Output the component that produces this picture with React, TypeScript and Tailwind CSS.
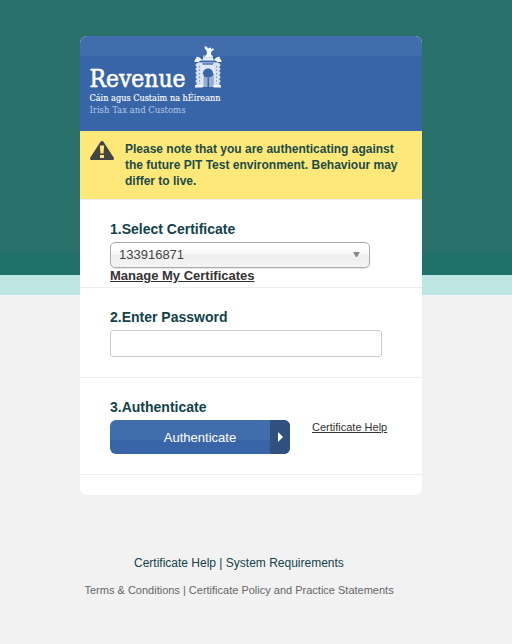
import React from "react";

function CustomsHouseArch() {
  return (
    <g fill="#f4f8fd">
      {/* statue */}
      <path d="M204.500 46.500h2.200l1.300 2.300 1-1h2.200v1.500l1.900-1 1 1.200-2.600 2-.6 2.500 1.600 3h-7.500l2-3.500-.5-3-1.500-1.500z" />
      <path d="M203 55.500h10v2.500h-10z" opacity=".6" />
      {/* scrolled wings and pediment */}
      <path d="M194.500 62c0-2 .8-3.300 2.200-4l-.7-1.200c2.500-.3 4.300.8 5.500 2.700h13c1.200-1.900 3-3 5.500-2.700l-.7 1.200c1.400.7 2.200 2 2.200 4h-4l-2-1.500h-15L198.500 62z" />
      <path d="M203 57.500h10v2.500h-10z" opacity=".9" />
      <path d="M198 62h20v1.500h-20z" opacity=".5" />
      {/* side pillars with alternating courses */}
      <path d="M196.500 63h6V87h-6zM213.500 63h6V87h-6z" opacity=".86" />
      <path d="M195.700 64h1v2h-1zm0 4h1v2h-1zm0 4h1v2h-1zm0 4h1v2h-1zm0 4h1v2h-1zM219.300 64h1v2h-1zm0 4h1v2h-1zm0 4h1v2h-1zm0 4h1v2h-1zm0 4h1v2h-1z" />
      <path d="M195 85h7.500v2.500H195zM213.500 85h7.500v2.500h-7.500z" />
      {/* arch surround with the open oculus below it */}
      <path d="M202 64.500h12v9h-1c0-2.800-2-5-5-5s-5 2.200-5 5h-1z" opacity=".88" />
      <path d="M202.500 74.500c1.200 2 3 3 5.500 3s4.300-1 5.500-3V87h-4.500v-9h-1.500v9h-5z" opacity=".5" />
      <path d="M202 74h1.500v13H202z" opacity=".8" />
      <path d="M199.500 66v18M216.500 66v18" stroke="#3864a8" strokeWidth=".6" strokeDasharray="1.500 2" />
      <path d="M203 64.500h10" stroke="#3864a8" strokeWidth=".5" strokeDasharray="1 1" />
    </g>
  );
}

function RevenueLogo() {
  return (
    <svg
      viewBox="80 36 160 90"
      className="block h-[90px] w-40 [font-family:'DejaVu_Serif_Condensed','DejaVu_Serif',serif]"
      role="img"
      aria-label="Revenue"
    >
      <text x="89.500" y="86.800" fontSize="25" textLength="96" lengthAdjust="spacingAndGlyphs" fill="#ffffff" stroke="#ffffff" strokeWidth=".6">
        Revenue
      </text>
      <text x="89.500" y="101" fontSize="10" textLength="131" lengthAdjust="spacingAndGlyphs" fill="#ffffff" stroke="#ffffff" strokeWidth=".15">
        Cáin agus Custaim na hÉireann
      </text>
      <text x="89.500" y="113" fontSize="10" textLength="96" lengthAdjust="spacingAndGlyphs" fill="#b5c8e5">
        Irish Tax and Customs
      </text>
      <CustomsHouseArch />
    </svg>
  );
}

function WarningIcon() {
  return (
    <svg viewBox="0 0 24 19" className="h-[19px] w-6 shrink-0">
      <path d="M10.500.8Q12-.8 13.500.8L23.800 16.800Q24.400 19 22.500 19H1.500Q-.4 19 .2 16.800Z" fill="#444444" />
      <path d="M9.800 4.500h4.400l-.7 8h-3zM10 14h4v3h-4z" fill="#fee879" />
    </svg>
  );
}

function Heading({ children }: { children: React.ReactNode }) {
  return <h2 className="text-[14px] leading-4 font-bold text-[#12424a]">{children}</h2>;
}

export default function App() {
  return (
    <div className="h-[644px] w-[512px] overflow-hidden bg-[linear-gradient(#29706a_0_253px,#20716a_253px_275px,#bee6e3_275px_295px,#f2f2f2_295px)] pt-9 [font-family:'Liberation_Sans',Arial,sans-serif]">
      <main className="ml-20 h-[459px] w-[342px] overflow-hidden rounded-[7px] bg-white">
        <header className="h-[95px] bg-[linear-gradient(#416dac_0_20px,#3864a8_20px)]">
          <RevenueLogo />
        </header>

        <div className="flex h-[69px] gap-[11px] border-b border-[#eeeeee] bg-[#fee879] pt-[10px] pl-[10px]">
          <WarningIcon />
          <p className="text-[12px] leading-4 font-bold whitespace-nowrap text-[#1c4b48]">
            Please note that you are authenticating against
            <br />
            the future PIT Test environment. Behaviour may
            <br />
            differ to live.
          </p>
        </div>

        <section className="h-[88px] border-b border-[#eeeeee] px-[30px] pt-[21px]">
          <Heading>1.Select Certificate</Heading>
          <button className="mt-[5px] flex h-[26px] w-[260px] items-center justify-between rounded-[5px] border border-[#aaaaaa] bg-[linear-gradient(#ffffff_20%,#f6f6f6_50%,#eeeeee_52%,#f4f4f4_100%)] pr-[9px] pl-2 text-[13px] leading-4 text-[#444444] shadow-[0_1px_1px_rgba(0,0,0,0.1)]">
            <span>133916871</span>
            <svg viewBox="0 0 7 5" className="mb-[2px] h-[5px] w-[7px]">
              <path d="M0 0h7L4 5H3z" fill="#888888" />
            </svg>
          </button>
          <a className="block text-[13px] leading-4 font-bold text-[#333333] underline">Manage My Certificates</a>
        </section>

        <section className="h-[90px] border-b border-[#eeeeee] px-[30px] pt-[21px]">
          <Heading>2.Enter Password</Heading>
          <input
            type="password"
            className="mt-[5px] block h-[27px] w-[272px] rounded-[3px] border border-[#cccccc] bg-white"
          />
        </section>

        <section className="h-[97px] border-b border-[#eeeeee] px-[30px] pt-[21px]">
          <Heading>3.Authenticate</Heading>
          <div className="mt-[5px] flex gap-[22px]">
            <button className="flex h-[34px] w-[180px] overflow-hidden rounded-[6px] bg-[linear-gradient(#416dac_0_20px,#3864a8_20px)] text-[13px] text-white">
              <span className="h-full w-40 pl-5 leading-[35px]">Authenticate</span>
              <span className="flex h-full w-5 items-center bg-[#305080] pl-2">
                <svg viewBox="0 0 5 10" className="h-[10px] w-[5px]">
                  <path d="M0 0l5 5-5 5z" fill="#ffffff" />
                </svg>
              </span>
            </button>
            <a className="text-[11px] leading-[14px] whitespace-nowrap text-[#333333] underline">Certificate Help</a>
          </div>
        </section>
      </main>

      <footer className="pt-[60px]">
        <p className="ml-[134px] text-[12px] leading-4 text-[#12424a]">Certificate Help | System Requirements</p>
        <p className="mt-[11px] ml-[84.500px] text-[11px] leading-4 text-[#666666]">
          Terms &amp; Conditions | Certificate Policy and Practice Statements
        </p>
      </footer>
    </div>
  );
}
